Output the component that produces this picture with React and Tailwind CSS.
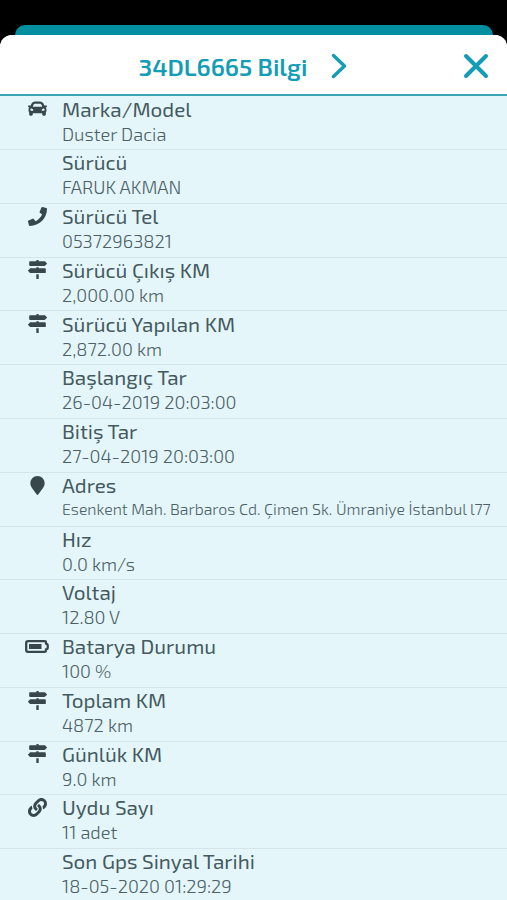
import { FaCar, FaPhone, FaMapSigns, FaMapMarker, FaLink } from 'react-icons/fa'

function Battery(){
  return (
    <svg className="-mr-[2px] mt-[3px]" width="24" height="13" viewBox="0 0 24 13" fill="none" stroke="currentColor" strokeWidth="2.3">
      <path d="M3 1.200h16.500q1.500 0 1.500 1.300v1.100q1.700 .3 1.700 1.500v2.800q0 1.200-1.700 1.500v1.100q0 1.300-1.500 1.300H3q-1.800 0-1.800-1.800V3q0-1.800 1.800-1.800z" />
      <rect x="4" y="4" width="12.5" height="5" fill="currentColor" stroke="none" />
    </svg>
  )
}

const rows = [
  { icon: FaCar, title: 'Marka/Model', value: 'Duster Dacia' },
  { title: 'Sürücü', value: 'FARUK AKMAN' },
  { icon: FaPhone, title: 'Sürücü Tel', value: '05372963821' },
  { icon: FaMapSigns, title: 'Sürücü Çıkış KM', value: '2,000.00 km' },
  { icon: FaMapSigns, title: 'Sürücü Yapılan KM', value: '2,872.00 km' },
  { title: 'Başlangıç Tar', value: '26-04-2019 20:03:00' },
  { title: 'Bitiş Tar', value: '27-04-2019 20:03:00' },
  { icon: FaMapMarker, title: 'Adres', value: 'Esenkent Mah. Barbaros Cd. Çimen Sk. Ümraniye İstanbul l77', small: true },
  { title: 'Hız', value: '0.0 km/s' },
  { title: 'Voltaj', value: '12.80 V' },
  { icon: Battery, title: 'Batarya Durumu', value: '100 %' },
  { icon: FaMapSigns, title: 'Toplam KM', value: '4872 km' },
  { icon: FaMapSigns, title: 'Günlük KM', value: '9.0 km' },
  { icon: FaLink, title: 'Uydu Sayı', value: '11 adet' },
  { title: 'Son Gps Sinyal Tarihi', value: '18-05-2020 01:29:29' },
]

function InfoRow({ row }){
  const Icon = row.icon
  return (
    <div className="flex h-[53.77px] shrink-0 border-b border-[#d3e5e9]">
      <div className="w-[62px] shrink-0 flex justify-end items-start pr-[15px] pt-[2.8px] text-[#37474c]">
        {Icon && <Icon size={19} />}
      </div>
      <div className="whitespace-nowrap -mt-[0.9px]">
        <div className="text-[20.7px] leading-[25px] text-[#455a5f]">{row.title}</div>
        <div className={row.small ? 'text-[15.9px] leading-[24.6px] font-light text-[#4c6065]' : 'text-[18.3px] leading-[26.4px] font-light text-[#4c6065]'}>{row.value}</div>
      </div>
    </div>
  )
}

export default function App(){
  return (
    <div className="h-[900px] w-[507px] overflow-hidden bg-black flex flex-col pt-[25px] font-['Exo_2','Roboto',sans-serif]">
      <div className="h-[10px] ml-[15px] mr-[14px] shrink-0 rounded-t-[10px] bg-[#008fa1]" />
      <div className="flex-1 flex flex-col overflow-hidden rounded-t-[12px] bg-[#e4f6fa]">
        <div className="h-[61.4px] shrink-0 flex items-center bg-white border-b-2 border-[#3ba5b6] text-[#129cb5]">
          <h1 className="ml-[138.5px] mt-[5px] text-[24.3px] font-semibold whitespace-nowrap">34DL6665 Bilgi</h1>
          <svg className="ml-auto mt-[2px]" width="16" height="26" viewBox="0 0 16 26" fill="none" stroke="currentColor" strokeWidth="3.4" strokeLinecap="round" strokeLinejoin="round">
            <path d="M2.500 2.500l11 10.500-11 10.500" />
          </svg>
          <svg className="ml-[116px] mr-[18px] mt-[2px]" width="26" height="26" viewBox="0 0 26 26" fill="none" stroke="currentColor" strokeWidth="4" strokeLinecap="round">
            <path d="M3 3l20 20M23 3L3 23" />
          </svg>
        </div>
        {rows.map((row, i) => <InfoRow key={i} row={row} />)}
      </div>
    </div>
  )
}
